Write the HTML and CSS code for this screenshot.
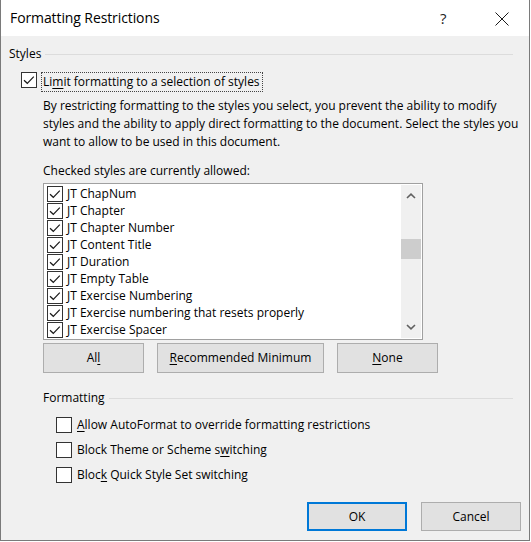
FILE: index.html
```html
<!DOCTYPE html>
<html>
<head>
<meta charset="utf-8">
<link rel="stylesheet" href="styles.css">
</head>
<body>
<div class="window">
  <div class="titlebar">
    <span class="title">Formatting Restrictions</span>
    <span class="help">?</span>
    <span class="close"><svg width="14" height="14" viewBox="0 0 14 14"><path d="M0.5 0.5 L13.5 13.5 M13.5 0.5 L0.5 13.5" stroke="#1a1a1a" stroke-width="1" fill="none"/></svg></span>
  </div>
  <div class="content">
    <div class="group-head"><span class="group-title">Styles</span><span class="rule"></span></div>
    <div class="limit-row">
      <span class="cb"><svg width="16" height="16" viewBox="0 0 16 16"><rect x="0.5" y="0.5" width="15" height="15" fill="#fff" stroke="#333"/><path d="M3 8.2 L6.3 11.3 L12.8 4.6" stroke="#1a1a1a" stroke-width="1.2" fill="none"/></svg></span>
      <span class="focus">Li<u>m</u>it formatting to a selection of styles</span>
    </div>
    <div class="indent">
      <p class="desc">By restricting formatting to the styles you select, you prevent the ability to modify styles and the ability to apply direct formatting to the document. Select the styles you want to allow to be used in this document.</p>
      <div class="list-label">Checked styles are currently allowed:</div>
      <div class="listbox">
        <div class="items">
          <div class="item"><span class="cb"><svg width="16" height="16" viewBox="0 0 16 16"><rect x="0.5" y="0.5" width="15" height="15" fill="#fff" stroke="#333"/><path d="M3 8.2 L6.3 11.3 L12.8 4.6" stroke="#1a1a1a" stroke-width="1.2" fill="none"/></svg></span><span class="item-text">JT ChapNum</span></div>
          <div class="item"><span class="cb"><svg width="16" height="16" viewBox="0 0 16 16"><rect x="0.5" y="0.5" width="15" height="15" fill="#fff" stroke="#333"/><path d="M3 8.2 L6.3 11.3 L12.8 4.6" stroke="#1a1a1a" stroke-width="1.2" fill="none"/></svg></span><span class="item-text">JT Chapter</span></div>
          <div class="item"><span class="cb"><svg width="16" height="16" viewBox="0 0 16 16"><rect x="0.5" y="0.5" width="15" height="15" fill="#fff" stroke="#333"/><path d="M3 8.2 L6.3 11.3 L12.8 4.6" stroke="#1a1a1a" stroke-width="1.2" fill="none"/></svg></span><span class="item-text">JT Chapter Number</span></div>
          <div class="item"><span class="cb"><svg width="16" height="16" viewBox="0 0 16 16"><rect x="0.5" y="0.5" width="15" height="15" fill="#fff" stroke="#333"/><path d="M3 8.2 L6.3 11.3 L12.8 4.6" stroke="#1a1a1a" stroke-width="1.2" fill="none"/></svg></span><span class="item-text">JT Content Title</span></div>
          <div class="item"><span class="cb"><svg width="16" height="16" viewBox="0 0 16 16"><rect x="0.5" y="0.5" width="15" height="15" fill="#fff" stroke="#333"/><path d="M3 8.2 L6.3 11.3 L12.8 4.6" stroke="#1a1a1a" stroke-width="1.2" fill="none"/></svg></span><span class="item-text">JT Duration</span></div>
          <div class="item"><span class="cb"><svg width="16" height="16" viewBox="0 0 16 16"><rect x="0.5" y="0.5" width="15" height="15" fill="#fff" stroke="#333"/><path d="M3 8.2 L6.3 11.3 L12.8 4.6" stroke="#1a1a1a" stroke-width="1.2" fill="none"/></svg></span><span class="item-text">JT Empty Table</span></div>
          <div class="item"><span class="cb"><svg width="16" height="16" viewBox="0 0 16 16"><rect x="0.5" y="0.5" width="15" height="15" fill="#fff" stroke="#333"/><path d="M3 8.2 L6.3 11.3 L12.8 4.6" stroke="#1a1a1a" stroke-width="1.2" fill="none"/></svg></span><span class="item-text">JT Exercise Numbering</span></div>
          <div class="item"><span class="cb"><svg width="16" height="16" viewBox="0 0 16 16"><rect x="0.5" y="0.5" width="15" height="15" fill="#fff" stroke="#333"/><path d="M3 8.2 L6.3 11.3 L12.8 4.6" stroke="#1a1a1a" stroke-width="1.2" fill="none"/></svg></span><span class="item-text">JT Exercise numbering that resets properly</span></div>
          <div class="item"><span class="cb"><svg width="16" height="16" viewBox="0 0 16 16"><rect x="0.5" y="0.5" width="15" height="15" fill="#fff" stroke="#333"/><path d="M3 8.2 L6.3 11.3 L12.8 4.6" stroke="#1a1a1a" stroke-width="1.2" fill="none"/></svg></span><span class="item-text">JT Exercise Spacer</span></div>
        </div>
        <div class="scrollbar">
          <span class="arrow"><svg width="10" height="6" viewBox="0 0 10 6"><path d="M1 5 L5 1.2 L9 5" stroke="#606060" stroke-width="1.6" fill="none"/></svg></span>
          <span class="track"><span class="thumb"></span></span>
          <span class="arrow"><svg width="10" height="6" viewBox="0 0 10 6"><path d="M1 1 L5 4.8 L9 1" stroke="#606060" stroke-width="1.6" fill="none"/></svg></span>
        </div>
      </div>
      <div class="btnrow">
        <button class="btn btn-all">A<span>l</span><u>l</u></button>
        <button class="btn btn-rec"><u>R</u>ecommended Minimum</button>
        <button class="btn btn-none"><u>N</u>one</button>
      </div>
      <div class="group-head group-fmt"><span class="group-title">Formatting</span><span class="rule"></span></div>
      <div class="opts">
        <div class="opt"><span class="cb"><svg width="16" height="16" viewBox="0 0 16 16"><rect x="0.5" y="0.5" width="15" height="15" fill="#fff" stroke="#333"/></svg></span><span class="opt-text"><u>A</u>llow AutoFormat to override formatting restrictions</span></div>
        <div class="opt"><span class="cb"><svg width="16" height="16" viewBox="0 0 16 16"><rect x="0.5" y="0.5" width="15" height="15" fill="#fff" stroke="#333"/></svg></span><span class="opt-text">Block Theme or Scheme s<u>w</u>itching</span></div>
        <div class="opt"><span class="cb"><svg width="16" height="16" viewBox="0 0 16 16"><rect x="0.5" y="0.5" width="15" height="15" fill="#fff" stroke="#333"/></svg></span><span class="opt-text">Bloc<u>k</u> Quick Style Set switching</span></div>
      </div>
    </div>
    <div class="footer">
      <button class="btn btn-ok">OK</button>
      <button class="btn btn-cancel">Cancel</button>
    </div>
  </div>
</div>
</body>
</html>
```
FILE: styles.css
```css
* { box-sizing: border-box; }
html, body { margin: 0; padding: 0; background: #ffffff; }
body {
  font-family: "Open Sans", "Noto Sans", sans-serif;
  font-size: 12px;
  color: #000;
}
.window {
  width: 530px;
  height: 541px;
  background: #f0f0f0;
  border: 1px solid #7a7a7a;
  border-top: none;
  display: flex;
  flex-direction: column;
}
.titlebar {
  height: 36px;
  background: #ffffff;
  display: flex;
  align-items: center;
  padding-left: 9px;
}
.title {
  font-size: 14px;
  line-height: 36px;
  letter-spacing: -0.1px;
  flex: 1;
}
.help {
  font-size: 15px;
  width: 20px;
  margin-right: 35px;
  color: #222;
}
.close {
  display: flex;
  width: 14px;
  margin-right: 20px;
  margin-top: 1px;
}
.content {
  padding: 10px 8px 0 8px;
  flex: 1;
  display: flex;
  flex-direction: column;
}
.group-head {
  display: flex;
  align-items: center;
  height: 16px;
  line-height: 16px;
}
.group-title { margin-right: 4px; }
.rule {
  flex: 1;
  height: 1px;
  background: #dcdcdc;
  margin-right: 8px;
}
.limit-row {
  display: flex;
  align-items: flex-start;
  margin-top: 10px;
  padding-left: 12px;
}
.cb { display: flex; width: 16px; height: 16px; flex: none; }
.focus {
  margin-left: 4px;
  border: 1px dotted #444;
  line-height: 18px;
  padding: 0 2px 0 1px;
}
.focus u, .btn u, .opt-text u { text-decoration-thickness: 1px; text-underline-offset: 2px; }
.indent { padding-left: 34px; }
.desc {
  margin: 5px 0 0 0;
  width: 478px;
  line-height: 18px;
}
.list-label {
  margin-top: 11px;
  line-height: 18px;
}
.listbox {
  margin-top: 3px;
  width: 380px;
  height: 157px;
  border: 1px solid #a0a0a0;
  background: #fff;
  padding: 1px;
  display: flex;
}
.items {
  flex: 1;
  overflow: hidden;
  padding-left: 2px;
}
.item {
  height: 17px;
  display: flex;
  align-items: center;
  line-height: 17px;
  white-space: nowrap;
}
.item-text { margin-left: 4px; }
.scrollbar {
  width: 20px;
  background: #f0f0f0;
  display: flex;
  flex-direction: column;
}
.arrow {
  height: 22px;
  display: flex;
  align-items: center;
  justify-content: center;
}
.track { flex: 1; display: flex; flex-direction: column; }
.thumb {
  display: block;
  margin-top: 32px;
  height: 20px;
  background: #cdcdcd;
}
.btnrow {
  margin-top: 3px;
  display: flex;
  gap: 13px;
}
.btn {
  font-family: inherit;
  font-size: 12px;
  color: #000;
  background: #e1e1e1;
  border: 1px solid #adadad;
  height: 30px;
  padding: 0;
  margin: 0;
  line-height: 16px;
}
.btn-all { width: 101px; }
.btn-rec { width: 167px; }
.btn-none { width: 101px; }
.group-fmt { margin-top: 17px; }
.opts {
  margin-top: 11px;
  padding-left: 13px;
  display: flex;
  flex-direction: column;
  gap: 9px;
}
.opt {
  display: flex;
  align-items: center;
  height: 16px;
  line-height: 16px;
}
.opt-text { margin-left: 5px; }
.footer {
  margin-top: 19px;
  display: flex;
  justify-content: flex-end;
  gap: 14px;
}
.btn-ok, .btn-cancel { width: 100px; height: 29px; }
.btn-ok { border: 2px solid #0078d7; }
```
